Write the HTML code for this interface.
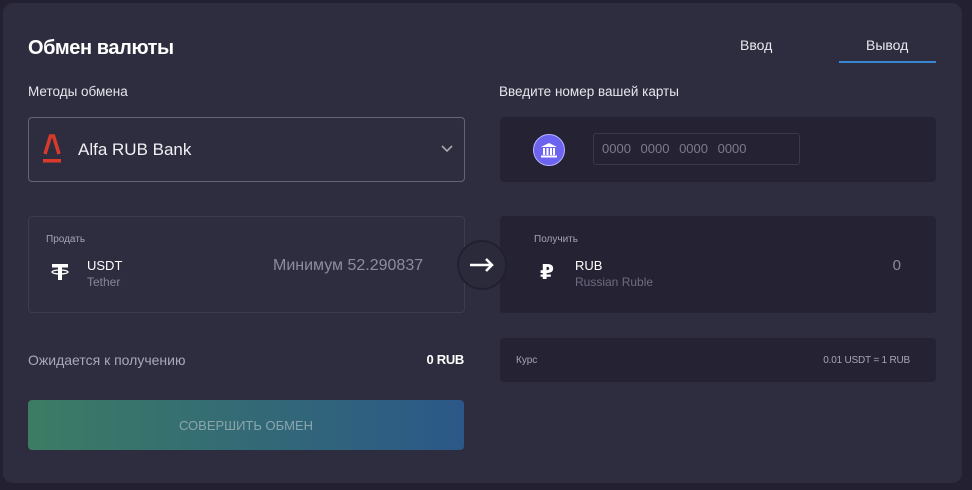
<!DOCTYPE html>
<html><head><meta charset="utf-8"><style>
*{margin:0;padding:0;box-sizing:border-box}
body{width:972px;height:490px;background:#222031;font-family:"Liberation Sans","DejaVu Sans",sans-serif;position:relative;overflow:hidden;color:#fff}
.card{position:absolute;left:3px;top:3px;width:959px;height:480px;background:#2e2d3f;border-radius:10px}
.a{position:absolute}
.dark{background:#242233;border-radius:4px}
.t{white-space:nowrap}
</style></head><body>
<div class="card"></div>
<div class="a t" style="left:28px;top:37px;font-size:20px;font-weight:bold;letter-spacing:-0.4px">Обмен валюты</div>
<div class="a t" style="left:740px;top:37px;font-size:14px;color:#e8e8ee">Ввод</div>
<div class="a t" style="left:866px;top:37px;font-size:14px;color:#e8e8ee">Вывод</div>
<div class="a" style="left:839px;top:61px;width:97px;height:2px;background:#3a86d0"></div>
<div class="a t" style="left:28px;top:84px;font-size:13.5px;color:#e6e6ec">Методы обмена</div>
<div class="a t" style="left:499px;top:84px;font-size:13.5px;color:#e6e6ec">Введите номер вашей карты</div>

<div class="a" style="left:28px;top:117px;width:437px;height:65px;border:1px solid #64637a;border-radius:4px"></div>
<div class="a" style="left:42px;top:133px;width:20px;height:32px">
<svg width="20" height="32" viewBox="0 0 20 32"><path d="M3 21 L8.5 3 H11.5 L17 21" fill="none" stroke="#d93a2b" stroke-width="3.5"/><rect x="1" y="26" width="18" height="3.5" fill="#d93a2b"/></svg></div>
<div class="a t" style="left:78px;top:140px;font-size:17px;color:#f0f0f4">Alfa RUB Bank</div>
<svg class="a" style="left:441px;top:145px" width="12" height="8"><path d="M1 1 L6 6 L11 1" fill="none" stroke="#aaa" stroke-width="1.6"/></svg>

<div class="a dark" style="left:500px;top:117px;width:436px;height:65px"></div>
<div class="a" style="left:533px;top:134px;width:32px;height:32px;border-radius:50%;background:#6c63f0;border:1px solid #b8b4ff"></div>
<svg class="a" style="left:540px;top:141px" width="18" height="18" viewBox="0 0 18 18"><path d="M1 6 L9 2 L17 6Z" fill="#fff"/><rect x="3" y="7" width="2" height="7" fill="#fff"/><rect x="6.5" y="7" width="2" height="7" fill="#fff"/><rect x="10" y="7" width="2" height="7" fill="#fff"/><rect x="13" y="7" width="2" height="7" fill="#fff"/><rect x="1" y="14.5" width="16" height="2" fill="#fff"/></svg>
<div class="a" style="left:593px;top:133px;width:207px;height:32px;border:1px solid #3a384c;border-radius:3px"></div>
<div class="a t" style="left:602px;top:141px;font-size:13px;color:#7c7b8c;word-spacing:6px">0000 0000 0000 0000</div>

<div class="a" style="left:28px;top:216px;width:437px;height:97px;border:1px solid #3c3b50;border-radius:4px"></div>
<div class="a t" style="left:46px;top:234px;font-size:10px;color:#a6a5b4">Продать</div>
<svg class="a" style="left:50px;top:262px" width="20" height="20" viewBox="0 0 20 20"><rect x="2" y="2" width="16" height="3.5" fill="#fff"/><rect x="8" y="2" width="4" height="16" fill="#fff"/><ellipse cx="10" cy="10" rx="8" ry="2" fill="none" stroke="#fff" stroke-width="1.3"/></svg>
<div class="a t" style="left:87px;top:258px;font-size:13px;color:#fff">USDT</div>
<div class="a t" style="left:87px;top:275px;font-size:12px;color:#87869a">Tether</div>
<div class="a t" style="left:273px;top:257px;font-size:16px;color:#8d8c9c">Минимум 52.290837</div>

<div class="a dark" style="left:500px;top:216px;width:436px;height:97px"></div>
<div class="a t" style="left:534px;top:234px;font-size:10px;color:#a6a5b4">Получить</div>
<div class="a t" style="left:540px;top:260px;font-size:20px;font-weight:bold;color:#fff">₽</div>
<div class="a t" style="left:575px;top:258px;font-size:13px;color:#fff">RUB</div>
<div class="a t" style="left:575px;top:275px;font-size:12px;color:#6e6d80">Russian Ruble</div>
<div class="a t" style="left:800px;width:101px;text-align:right;top:257px;font-size:15px;color:#8d8c9c">0</div>

<div class="a" style="left:457px;top:240px;width:50px;height:50px;border-radius:50%;background:#2b2a3b;border:2px solid #222030"></div>
<svg class="a" style="left:468px;top:257px" width="28" height="16" viewBox="0 0 28 16"><path d="M2 8 H24 M18 2 L24 8 L18 14" fill="none" stroke="#fff" stroke-width="2.5"/></svg>

<div class="a t" style="left:28px;top:352px;font-size:14px;color:#a9a8b8">Ожидается к получению</div>
<div class="a t" style="left:364px;width:100px;text-align:right;top:352px;font-size:13px;font-weight:bold;color:#fff;letter-spacing:-0.3px">0 RUB</div>

<div class="a dark" style="left:500px;top:338px;width:436px;height:44px"></div>
<div class="a t" style="left:516px;top:355px;font-size:10px;color:#a6a5b4">Курс</div>
<div class="a t" style="left:760px;width:150px;text-align:right;top:355px;font-size:10px;color:#a6a5b4;letter-spacing:-0.2px">0.01 USDT = 1 RUB</div>

<div class="a" style="left:28px;top:400px;width:436px;height:50px;border-radius:4px;background:linear-gradient(90deg,#3c7c63,#2b5888)"></div>
<div class="a t" style="left:28px;top:418px;width:436px;text-align:center;font-size:13px;color:#8aa6ad">СОВЕРШИТЬ ОБМЕН</div>
</body></html>
